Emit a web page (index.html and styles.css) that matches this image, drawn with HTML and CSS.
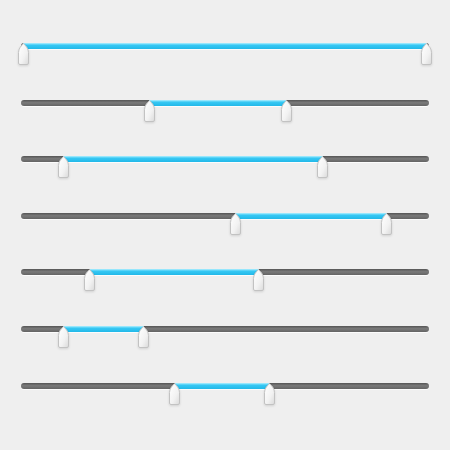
FILE: index.html
```html
<!DOCTYPE html>
<html lang="en">
<head>
    <meta charset="UTF-8">
    <title>Range sliders</title>
    <link rel="stylesheet" href="styles.css">
</head>
<body>
    <svg width="0" height="0" class="defs">
        <defs>
            <linearGradient id="knobFill" x1="0" y1="0" x2="1" y2="1">
                <stop offset="0" stop-color="#ffffff"/>
                <stop offset="0.6" stop-color="#f2f2f2"/>
                <stop offset="1" stop-color="#d9d9d9"/>
            </linearGradient>
            <symbol id="knob" viewBox="0 0 11 22">
                <path d="M5.5 0.7 C8 2.6 10.5 6 10.5 9.5 L10.5 20 Q10.5 21.5 9 21.5 L2 21.5 Q0.5 21.5 0.5 20 L0.5 9.5 C0.5 6 3 2.6 5.5 0.7 Z"
                      fill="url(#knobFill)" stroke="#c2c2c2" stroke-width="1"/>
            </symbol>
        </defs>
    </svg>

    <div class="sliders">
        <div class="row">
            <div class="track">
                <div class="fill" style="left: 0.5%; width: 99%;"></div>
                <svg class="knob" style="left: 0.5%;"><use href="#knob"/></svg>
                <svg class="knob" style="left: 99.5%;"><use href="#knob"/></svg>
            </div>
        </div>
        <div class="row">
            <div class="track">
                <div class="fill" style="left: 31.4%; width: 33.6%;"></div>
                <svg class="knob" style="left: 31.4%;"><use href="#knob"/></svg>
                <svg class="knob" style="left: 65%;"><use href="#knob"/></svg>
            </div>
        </div>
        <div class="row">
            <div class="track">
                <div class="fill" style="left: 10.3%; width: 63.7%;"></div>
                <svg class="knob" style="left: 10.3%;"><use href="#knob"/></svg>
                <svg class="knob" style="left: 74%;"><use href="#knob"/></svg>
            </div>
        </div>
        <div class="row">
            <div class="track">
                <div class="fill" style="left: 52.5%; width: 37.2%;"></div>
                <svg class="knob" style="left: 52.5%;"><use href="#knob"/></svg>
                <svg class="knob" style="left: 89.7%;"><use href="#knob"/></svg>
            </div>
        </div>
        <div class="row">
            <div class="track">
                <div class="fill" style="left: 16.9%; width: 41.4%;"></div>
                <svg class="knob" style="left: 16.9%;"><use href="#knob"/></svg>
                <svg class="knob" style="left: 58.3%;"><use href="#knob"/></svg>
            </div>
        </div>
        <div class="row">
            <div class="track">
                <div class="fill" style="left: 10.3%; width: 19.8%;"></div>
                <svg class="knob" style="left: 10.3%;"><use href="#knob"/></svg>
                <svg class="knob" style="left: 30.1%;"><use href="#knob"/></svg>
            </div>
        </div>
        <div class="row">
            <div class="track">
                <div class="fill" style="left: 37.7%; width: 23.1%;"></div>
                <svg class="knob" style="left: 37.7%;"><use href="#knob"/></svg>
                <svg class="knob" style="left: 60.8%;"><use href="#knob"/></svg>
            </div>
        </div>
    </div>
</body>
</html>
```

FILE: styles.css
```css
body {
    margin: 0;
    background: #efefef;
    font-family: "Liberation Sans", Arial, sans-serif;
}
.defs {
    position: absolute;
    width: 0;
    height: 0;
}
.sliders {
    padding: 43px 21px 0 21px;
}
.row {
    height: 56.6px;
}
.track {
    position: relative;
    height: 6px;
    border-radius: 3px;
    background: linear-gradient(#555555, #7a7a7a 45%, #646464);
    box-shadow: 0 1px 0 rgba(255,255,255,0.8);
}
.fill {
    position: absolute;
    top: 0;
    bottom: 0;
    background: linear-gradient(#b4f0ff, #36c8f4 35%, #22b8e8);
}
.knob {
    position: absolute;
    top: 0;
    width: 11px;
    height: 22px;
    margin-left: -5.5px;
    overflow: visible;
    filter: drop-shadow(0 1px 1px rgba(0,0,0,0.12));
}
```
